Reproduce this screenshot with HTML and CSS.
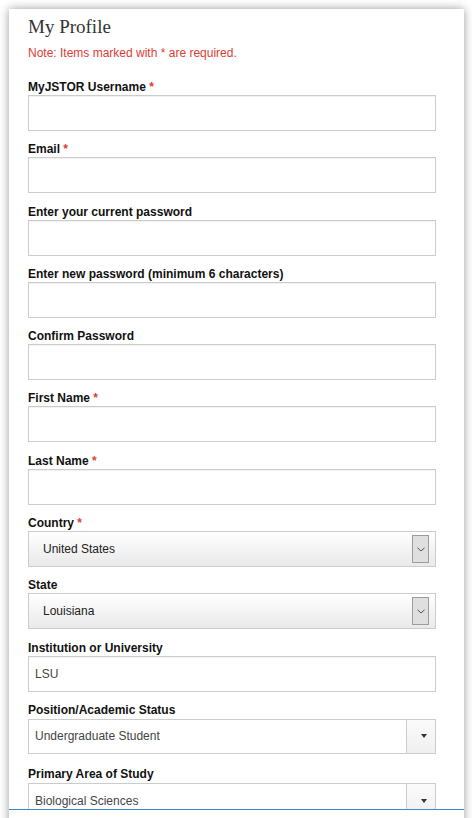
FILE: index.html
```html
<!DOCTYPE html>
<html lang="en">
<head>
<meta charset="utf-8">
<title>My Profile</title>
<link rel="stylesheet" href="styles.css">
</head>
<body>
<div class="page">
  <div class="card">
    <div class="scroll">
      <h1 class="title">My Profile</h1>
      <p class="note">Note: Items marked with * are required.</p>
      <div class="form">
        <div class="field">
          <div class="label">MyJSTOR Username <span class="req">*</span></div>
          <div class="input"></div>
        </div>
        <div class="field">
          <div class="label">Email <span class="req">*</span></div>
          <div class="input"></div>
        </div>
        <div class="field">
          <div class="label">Enter your current password</div>
          <div class="input"></div>
        </div>
        <div class="field">
          <div class="label">Enter new password (minimum 6 characters)</div>
          <div class="input"></div>
        </div>
        <div class="field">
          <div class="label">Confirm Password</div>
          <div class="input"></div>
        </div>
        <div class="field">
          <div class="label">First Name <span class="req">*</span></div>
          <div class="input"></div>
        </div>
        <div class="field">
          <div class="label">Last Name <span class="req">*</span></div>
          <div class="input"></div>
        </div>
        <div class="field">
          <div class="label">Country <span class="req">*</span></div>
          <div class="select">
            <span class="select-text">United States</span>
            <span class="select-btn"><svg width="8" height="5" viewBox="0 0 8 5"><polyline points="0.5,0.8 4,4 7.5,0.8" fill="none" stroke="#555" stroke-width="1"/></svg></span>
          </div>
        </div>
        <div class="field">
          <div class="label">State</div>
          <div class="select">
            <span class="select-text">Louisiana</span>
            <span class="select-btn"><svg width="8" height="5" viewBox="0 0 8 5"><polyline points="0.5,0.8 4,4 7.5,0.8" fill="none" stroke="#555" stroke-width="1"/></svg></span>
          </div>
        </div>
        <div class="field">
          <div class="label">Institution or University</div>
          <div class="input">LSU</div>
        </div>
        <div class="field field-chosen">
          <div class="label">Position/Academic Status</div>
          <div class="chosen">
            <span class="chosen-text">Undergraduate Student</span>
            <span class="chosen-btn"><span class="tri"></span></span>
          </div>
        </div>
        <div class="field field-chosen">
          <div class="label">Primary Area of Study</div>
          <div class="chosen">
            <span class="chosen-text">Biological Sciences</span>
            <span class="chosen-btn"><span class="tri"></span></span>
          </div>
        </div>
      </div>
    </div>
    <div class="footer"></div>
  </div>
</div>
</body>
</html>
```
FILE: styles.css
```css
html, body {
  margin: 0;
  padding: 0;
  background: #fff;
  height: 818px;
  overflow: hidden;
}
body {
  font-family: "Liberation Sans", Arial, sans-serif;
}
.page {
  padding: 9px 8px 0 9px;
}
.card {
  width: 455px;
  background: #fff;
  box-shadow: 0 0 9px rgba(0, 0, 0, 0.4);
}
.scroll {
  height: 800px;
  overflow: hidden;
  box-sizing: border-box;
  padding: 6px 28px 0 19px;
}
.footer {
  height: 30px;
  border-top: 1px solid #3a86d0;
  background: #fff;
}
.title {
  margin: 0;
  font-family: "Liberation Serif", Georgia, serif;
  font-weight: normal;
  font-size: 19px;
  line-height: 24px;
  color: #333;
}
.note {
  margin: 6px 0 0;
  font-size: 12px;
  line-height: 16px;
  color: #e03b36;
}
.form {
  margin-top: 18px;
}
.field {
  margin-bottom: 10.3px;
}
.field-chosen {
  margin-bottom: 12.5px;
}
.label {
  font-weight: bold;
  font-size: 12px;
  line-height: 16px;
  color: #111;
}
.req {
  color: #e03b36;
}
.input {
  height: 36px;
  box-sizing: border-box;
  border: 1px solid #ccc;
  box-shadow: inset 0 1px 1px rgba(0, 0, 0, 0.06);
  background: #fff;
  padding: 0 6px;
  display: flex;
  align-items: center;
  font-size: 12px;
  color: #444;
}
.select {
  height: 36px;
  box-sizing: border-box;
  border: 1px solid #ccc;
  background: linear-gradient(#ffffff, #e9e9e9);
  display: flex;
  align-items: center;
  padding: 0 6px 0 14px;
  font-size: 12px;
  color: #222;
}
.select-text {
  flex: 1;
}
.select-btn {
  width: 17px;
  height: 28px;
  box-sizing: border-box;
  border: 1px solid #9c9c9c;
  background: #dfdfdf;
  display: flex;
  align-items: center;
  justify-content: center;
}
.chosen {
  margin-top: 1px;
  height: 35px;
  box-sizing: border-box;
  border: 1px solid #ccc;
  background: #fff;
  display: flex;
  font-size: 12px;
  color: #444;
}
.chosen-text {
  flex: 1;
  display: flex;
  align-items: center;
  padding-left: 6px;
}
.chosen-btn {
  width: 29px;
  box-sizing: border-box;
  border-left: 1px solid #ccc;
  background: linear-gradient(#fbfbfb, #efefef);
  display: flex;
  align-items: center;
  padding-left: 14px;
}
.tri {
  width: 0;
  height: 0;
  border-top: 4px solid #333;
  border-left: 3.5px solid transparent;
  border-right: 3.5px solid transparent;
}
```
